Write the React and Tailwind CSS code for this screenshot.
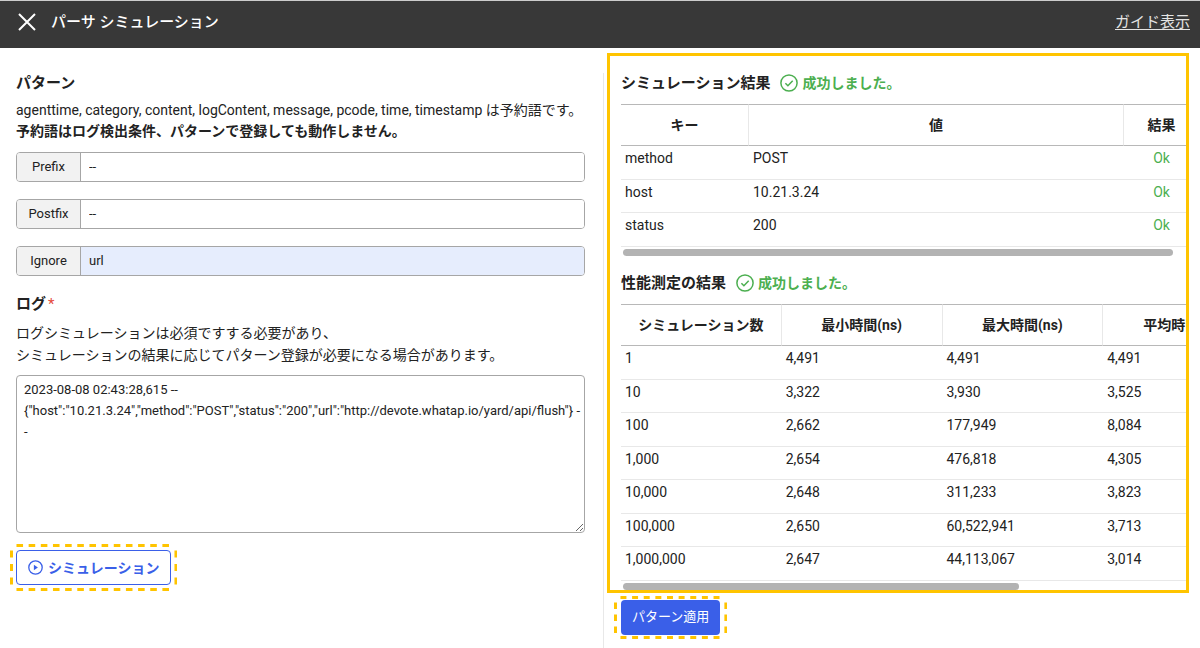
import React from "react";

const PATTERNS = [
  { id: "prefix", label: "Prefix", value: "--", fill: "bg-white" },
  { id: "postfix", label: "Postfix", value: "--", fill: "bg-white" },
  { id: "ignore", label: "Ignore", value: "url", fill: "bg-[#e6edfd]" },
];

const LOG_TEXT =
  '2023-08-08 02:43:28,615 --\n{"host":"10.21.3.24","method":"POST","status":"200","url":"http://devote.whatap.io/yard/api/flush"} -\n-';

const RESULT_ROWS = [
  ["method", "POST", "Ok"],
  ["host", "10.21.3.24", "Ok"],
  ["status", "200", "Ok"],
];

const PERF_HEADERS = ["シミュレーション数", "最小時間(ns)", "最大時間(ns)", "平均時間(ns)"];

const PERF_ROWS = [
  ["1", "4,491", "4,491", "4,491"],
  ["10", "3,322", "3,930", "3,525"],
  ["100", "2,662", "177,949", "8,084"],
  ["1,000", "2,654", "476,818", "4,305"],
  ["10,000", "2,648", "311,233", "3,823"],
  ["100,000", "2,650", "60,522,941", "3,713"],
  ["1,000,000", "2,647", "44,113,067", "3,014"],
];

function CloseIcon() {
  return (
    <svg width="18" height="18" viewBox="0 0 18 18" fill="none" stroke="#fff" strokeWidth="2" aria-hidden="true">
      <path d="M1 1l16 16M17 1L1 17" />
    </svg>
  );
}

function CheckCircleIcon() {
  return (
    <svg width="18" height="18" viewBox="0 0 18 18" fill="none" stroke="currentColor" strokeWidth="1.5" aria-hidden="true">
      <circle cx="9" cy="9" r="8.1" />
      <path d="M5.4 9.2l2.5 2.5 4.8-5" />
    </svg>
  );
}

function PlayCircleIcon() {
  return (
    <svg width="15" height="15" viewBox="0 0 15 15" fill="none" aria-hidden="true">
      <circle cx="7.5" cy="7.5" r="6.7" stroke="currentColor" strokeWidth="1.3" />
      <path d="M5.9 4.8v5.4l4-2.7z" fill="currentColor" />
    </svg>
  );
}

// Dashed highlight ring with open corners, drawn around its positioned parent.
function DashedRing({ width, height, dashX, dashY }) {
  const right = width - 1.5;
  const bottom = height - 1.5;
  return (
    <svg
      className="pointer-events-none absolute inset-0 size-full"
      viewBox={`0 0 ${width} ${height}`}
      preserveAspectRatio="none"
      fill="none"
      stroke="#ffc400"
      strokeWidth="3"
      aria-hidden="true"
    >
      <path d={`M6.5 1.5H${width - 6}M6.5 ${bottom}H${width - 6}`} strokeDasharray={dashX} />
      <path d={`M1.5 6.5V${height - 6}M${right} 6.5V${height - 6}`} strokeDasharray={dashY} />
    </svg>
  );
}

function ResultHeading({ children }) {
  return (
    <div className="flex h-6 items-center">
      <h2 className="text-[15px] font-bold leading-6">{children}</h2>
      <p className="ml-2.5 flex items-center gap-1 text-sm font-bold leading-6 text-[#4caf50]">
        <CheckCircleIcon />
        成功しました。
      </p>
    </div>
  );
}

const TABLE = "mt-[9px] table-fixed border-separate border-spacing-0 text-sm";
const TH =
  "h-[42px] border-y border-r border-y-[#b8b8b8] border-r-[#e8e8e8] p-0 text-center align-middle font-bold leading-5 last:border-r-0";
const TD = "border-b border-[#e8e8e8] px-1 py-0 align-top leading-[25px]";
const TR = "odd:h-[34px] even:h-[33px]";

export default function App() {
  return (
    <div className="flex min-h-screen flex-col bg-white font-[Roboto,'Noto_Sans_CJK_JP',sans-serif] text-sm text-[#222]">
      <header className="flex h-12 items-center border-t border-[#ccc] bg-[#383838] pb-[5px] pl-[18px] pr-2.5 text-[15px] text-white">
        <button type="button" aria-label="閉じる" className="flex">
          <CloseIcon />
        </button>
        <h1 className="ml-[15px] font-medium leading-5">パーサ シミュレーション</h1>
        <a href="#guide" className="ml-auto leading-5 text-[#e4e4e4] underline underline-offset-2">
          ガイド表示
        </a>
      </header>

      <main className="grid flex-1 grid-cols-[587fr_1px_585fr] pl-4 pr-[11px]">
        <section className="mr-[18px] min-w-0 pt-[23px]">
          <h2 className="text-[15px] font-bold leading-6">パターン</h2>
          <p className="mt-[5px] leading-[21px]">
            agenttime, category, content, logContent, message, pcode, time, timestamp は予約語です。
            <br />
            <strong className="font-bold">予約語はログ検出条件、パターンで登録しても動作しません。</strong>
          </p>

          <div className="mt-2.5 flex flex-col gap-[17px]">
            {PATTERNS.map((p) => (
              <div key={p.id} className="flex h-[30px] overflow-hidden rounded border border-[#a6a6a6]">
                <label
                  htmlFor={p.id}
                  className="flex w-16 shrink-0 items-center justify-center border-r border-[#a6a6a6] bg-[#f2f2f2] text-[13px]"
                >
                  {p.label}
                </label>
                <input id={p.id} type="text" defaultValue={p.value} className={`min-w-0 flex-1 px-2 text-[13px] outline-none ${p.fill}`} />
              </div>
            ))}
          </div>

          <h2 className="mt-4 text-[15px] font-bold leading-6">
            <label htmlFor="log">
              ログ<span className="ml-0.5 font-normal text-[#e5483c]">*</span>
            </label>
          </h2>
          <p className="mt-1.5 leading-[22px]">
            ログシミュレーションは必須ですする必要があり、
            <br />
            シミュレーションの結果に応じてパターン登録が必要になる場合があります。
          </p>
          <textarea
            id="log"
            defaultValue={LOG_TEXT}
            className="mt-[9px] block h-[158px] w-full resize rounded border border-[#a6a6a6] py-[3px] pl-[7px] pr-0 text-[13px] leading-[21px] outline-none"
          />

          <div className="relative -ml-1.5 mt-[11px] w-fit p-1.5">
            <DashedRing width={168} height={47} dashX="6.6 5.6" dashY="7 6.5" />
            <button
              type="button"
              className="flex h-[35px] items-center gap-[5px] rounded border border-[#3a5fe8] bg-white px-[11px] text-sm font-bold text-[#3a5fe8]"
            >
              <PlayCircleIcon />
              シミュレーション
            </button>
          </div>
        </section>

        <div className="mt-[25px] bg-[#e8e8e8]" />

        <section className="ml-[3px] min-w-0 pt-[5px]">
          <div className="overflow-hidden border-[3px] border-[#ffc400] pl-[11px] pt-[15px]">
            <ResultHeading>シミュレーション結果</ResultHeading>
            <div className="overflow-hidden">
              <table className={`${TABLE} w-[578px]`}>
                <colgroup>
                  <col className="w-32" />
                  <col />
                  <col className="w-[75px]" />
                </colgroup>
                <thead>
                  <tr>
                    <th className={TH}>キー</th>
                    <th className={TH}>値</th>
                    <th className={TH}>結果</th>
                  </tr>
                </thead>
                <tbody>
                  {RESULT_ROWS.map(([key, value, result]) => (
                    <tr key={key} className={TR}>
                      <td className={TD}>{key}</td>
                      <td className={TD}>{value}</td>
                      <td className={`${TD} text-center text-[#4caf50]`}>{result}</td>
                    </tr>
                  ))}
                </tbody>
              </table>
            </div>
            <div className="ml-0.5 mr-[13px] mt-0.5 h-[7px] rounded-sm bg-[#b3b3b3]" />

            <div className="mt-[15px]">
              <ResultHeading>性能測定の結果</ResultHeading>
            </div>
            <div className="overflow-hidden">
              <table className={`${TABLE} w-[643px]`}>
                <thead>
                  <tr>
                    {PERF_HEADERS.map((h) => (
                      <th key={h} className={TH}>{h}</th>
                    ))}
                  </tr>
                </thead>
                <tbody>
                  {PERF_ROWS.map((row) => (
                    <tr key={row[0]} className={TR}>
                      {row.map((cell, i) => (
                        <td key={i} className={TD}>{cell}</td>
                      ))}
                    </tr>
                  ))}
                </tbody>
              </table>
            </div>
            <div className="ml-0.5 mt-0.5 h-[7px] w-[70%] rounded-sm bg-[#b3b3b3]" />
          </div>

          <div className="relative ml-[7px] mt-[3px] w-fit px-[7px] py-1">
            <DashedRing width={114} height={43} dashX="6 5.7" dashY="6.5 5.5" />
            <button type="button" className="block h-[35px] rounded bg-[#3a5fe8] px-[11px] text-[13px] text-white">
              パターン適用
            </button>
          </div>
        </section>
      </main>
    </div>
  );
}
